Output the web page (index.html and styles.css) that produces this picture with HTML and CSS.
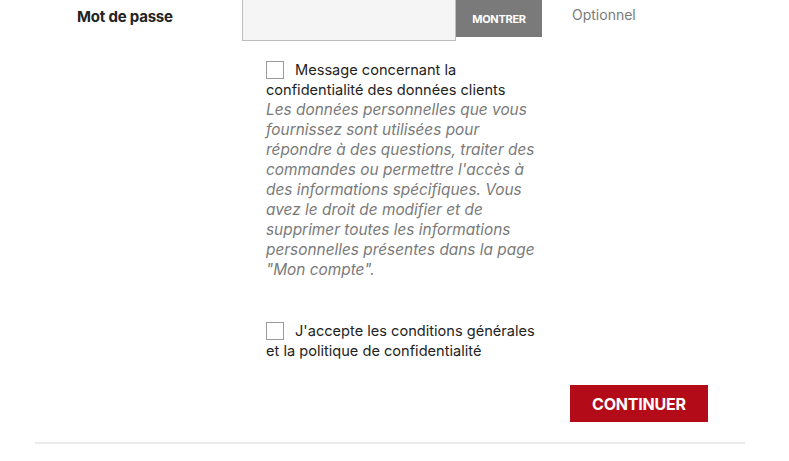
FILE: index.html
```html
<!DOCTYPE html>
<html lang="fr">
<head>
    <meta charset="UTF-8">
    <meta name="viewport" content="width=device-width, initial-scale=1.0">
    <title>Créer un compte</title>
    <link rel="stylesheet" href="styles.css">
</head>
<body>
    <div class="page">
        <form class="register-form">
            <div class="form-row">
                <label class="form-label" for="password">Mot de passe</label>
                <div class="input-group">
                    <input class="form-input" type="password" id="password" name="password">
                    <button type="button" class="show-button">Montrer</button>
                </div>
                <span class="form-comment">Optionnel</span>
            </div>

            <div class="check-row">
                <label class="check-label">
                    <span class="checkbox"></span>Message concernant la confidentialité des données clients
                </label>
                <p class="check-note">Les données personnelles que vous fournissez sont utilisées pour répondre à des questions, traiter des commandes ou permettre l'accès à des informations spécifiques. Vous avez le droit de modifier et de supprimer toutes les informations personnelles présentes dans la page "Mon compte".</p>
            </div>

            <div class="check-row terms">
                <label class="check-label">
                    <span class="checkbox"></span>J'accepte les conditions générales et la politique de confidentialité
                </label>
            </div>

            <div class="form-footer">
                <button type="submit" class="submit-button">Continuer</button>
            </div>
        </form>
        <hr class="separator">
    </div>
</body>
</html>
```

FILE: styles.css
```css
body {
    margin: 0;
    font-family: Inter, "Noto Sans", sans-serif;
    color: #232323;
    background: #fff;
}
.page {
    width: 710px;
    margin-left: 35px;
}
.register-form {
    margin-top: -6px;
}
.form-row {
    display: grid;
    grid-template-columns: 135px 300px auto;
    column-gap: 30px;
    padding-left: 42px;
    align-items: start;
}
.form-label {
    font-size: 15px;
    font-weight: 700;
    padding-top: 13px;
    letter-spacing: -0.2px;
}
.input-group {
    display: flex;
    align-items: flex-start;
}
.form-input {
    width: 214px;
    height: 47px;
    box-sizing: border-box;
    margin: 0;
    background: #f5f5f5;
    border: 1px solid #bdbdbd;
    outline: none;
}
.show-button {
    width: 86px;
    height: 43px;
    border: none;
    margin: 0;
    background: #7a7a7a;
    color: #fff;
    font-family: inherit;
    font-size: 11px;
    font-weight: 700;
    text-transform: uppercase;
    letter-spacing: -0.3px;
    padding: 6px 0 0;
}
.form-comment {
    font-size: 14px;
    color: #7a7a7a;
    padding-top: 12px;
}
.check-row {
    width: 276px;
    margin-left: 231px;
    font-size: 14.6px;
    line-height: 20px;
    margin-top: 19px;
}
.check-label {
    display: block;
}
.checkbox {
    display: inline-block;
    width: 16px;
    height: 16px;
    border: 1px solid #9a9a9a;
    vertical-align: -4px;
    margin-right: 11px;
}
.check-note {
    margin: 0;
    font-style: italic;
    color: #7a7a7a;
    font-size: 15.4px;
}
.terms {
    margin-top: 41px;
}
.form-footer {
    display: flex;
    justify-content: flex-end;
    padding-right: 37px;
    margin-top: 24px;
}
.submit-button {
    width: 138px;
    height: 37px;
    border: none;
    background: #b30c18;
    color: #fff;
    font-family: inherit;
    font-size: 16px;
    font-weight: 700;
    text-transform: uppercase;
    letter-spacing: -0.2px;
}
.separator {
    border: none;
    border-top: 2px solid #ebebeb;
    margin: 20px 0 0;
}
```
